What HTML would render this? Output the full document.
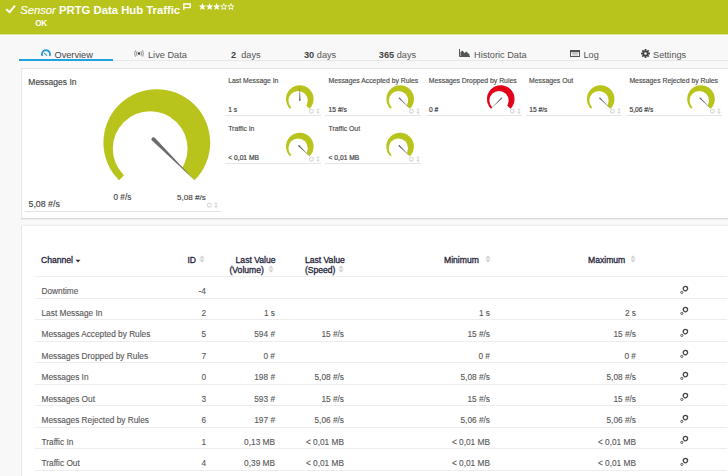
<!DOCTYPE html>
<html><head><meta charset="utf-8"><style>
*{margin:0;padding:0;box-sizing:border-box}
html,body{width:728px;height:476px;overflow:hidden}
body{background:#f8f8f8;font-family:"Liberation Sans",sans-serif;position:relative;color:#555}
.abs{position:absolute}
#hdr{position:absolute;left:0;top:0;width:728px;height:34px;background:#b8c41c}
#hdr .t{position:absolute;white-space:nowrap;color:#fff}
.tab{position:absolute;top:50px;font-size:9.2px;color:#555;white-space:nowrap;line-height:11px}
.tab b{color:#444}
#tabline{position:absolute;left:19px;top:60px;width:709px;height:1px;background:#e8e8e8}
#tabblue{position:absolute;left:19px;top:59px;width:94px;height:2px;background:#1fa3dc}
.panel{position:absolute;background:#fff;border:1px solid #e6e6e6;border-bottom-color:#dadada}
.sub{position:absolute;width:100px;height:48px}
.sub .st{position:absolute;left:3.2px;top:8px;font-size:6.85px;color:#4a4a4a;-webkit-text-stroke:0.15px #4a4a4a;white-space:nowrap;line-height:9px}
.sub .sv{position:absolute;left:3.3px;top:36.6px;font-size:6.7px;color:#444;-webkit-text-stroke:0.2px #444;white-space:nowrap;line-height:9px}
.sub .ul{position:absolute;left:0;top:47px;width:96px;height:1px;background:#e6e6e6}
.row{position:absolute;left:35px;width:692px;height:21.6px;border-top:1px solid #ededed}
.row span{position:absolute;top:9.2px;font-size:8.3px;line-height:10px;color:#585858;-webkit-text-stroke:0.12px #585858;white-space:nowrap}
.c0{left:6.5px}
.c1{right:calc(692px - 171px)}
.c2{right:calc(692px - 240px)}
.c3{right:calc(692px - 309px)}
.c4{right:calc(692px - 455px)}
.c5{right:calc(692px - 601px)}
.gear{left:645px;top:7.5px!important}
.hd{position:absolute;font-size:8.6px;color:#24243a;white-space:nowrap;line-height:9.5px;-webkit-text-stroke:0.3px #24243a}
.sic{position:absolute}
</style></head><body>
<div id="hdr">
  <svg class="abs" style="left:5px;top:4px" width="11" height="10" viewBox="0 0 11 10"><path d="M1.2,5.2 L4.6,8.2 L10,1.6" fill="none" stroke="#fff" stroke-width="1.9"/></svg>
  <div class="t" style="left:20.3px;top:3.6px;font-size:11.2px;font-style:italic;line-height:12px;-webkit-text-stroke:0.15px #fff">Sensor</div>
  <div class="t" style="left:59px;top:4px;font-size:11.3px;font-weight:bold;line-height:12px">PRTG Data Hub Traffic</div>
  <svg class="abs" style="left:183px;top:3px" width="8" height="7" viewBox="0 0 8 7"><path d="M0.8,0.3 V7 M0.8,1 H7.2 V4.6 H0.8" fill="none" stroke="#fff" stroke-width="1.4"/></svg>
  <svg class="abs" style="left:199.3px;top:3px" width="37" height="8" viewBox="0 0 37 8"><g transform="translate(0.0,0)"><path d="M3.5,0 L4.5,2.4 L7,2.5 L5.1,4.2 L5.8,6.9 L3.5,5.4 L1.2,6.9 L1.9,4.2 L0,2.5 L2.5,2.4Z" fill="#fff"/></g><g transform="translate(7.1,0)"><path d="M3.5,0 L4.5,2.4 L7,2.5 L5.1,4.2 L5.8,6.9 L3.5,5.4 L1.2,6.9 L1.9,4.2 L0,2.5 L2.5,2.4Z" fill="#fff"/></g><g transform="translate(14.2,0)"><path d="M3.5,0 L4.5,2.4 L7,2.5 L5.1,4.2 L5.8,6.9 L3.5,5.4 L1.2,6.9 L1.9,4.2 L0,2.5 L2.5,2.4Z" fill="#fff"/></g><g transform="translate(21.299999999999997,0)"><path d="M3.5,0.6 L4.3,2.8 L6.5,2.9 L4.8,4.3 L5.4,6.5 L3.5,5.2 L1.6,6.5 L2.2,4.3 L0.5,2.9 L2.7,2.8Z" fill="none" stroke="#fff" stroke-width="0.9"/></g><g transform="translate(28.4,0)"><path d="M3.5,0.6 L4.3,2.8 L6.5,2.9 L4.8,4.3 L5.4,6.5 L3.5,5.2 L1.6,6.5 L2.2,4.3 L0.5,2.9 L2.7,2.8Z" fill="none" stroke="#fff" stroke-width="0.9"/></g></svg>
  <div class="t" style="left:35.3px;top:18.9px;font-size:8.2px;font-weight:bold;line-height:9px;letter-spacing:-0.5px">OK</div>
</div>
<div class="abs" style="left:0;top:34px;width:728px;height:1px;background:#dce3a0"></div><div class="abs" style="left:0;top:35px;width:728px;height:1px;background:#fdfdfd"></div>

<svg class="abs" style="left:0;top:0" width="60" height="60"><path d="M42.3,56 A4.1,4.1 0 1 1 49.7,56" fill="none" stroke="#1e9ad8" stroke-width="1.7"/><path d="M44.5,53.4 L46.8,55.3" stroke="#3a8fd0" stroke-width="1.1" stroke-linecap="round"/></svg>
<div class="tab" style="left:54.5px;color:#444">Overview</div>
<svg class="abs" style="left:134.2px;top:49.8px" width="10" height="7" viewBox="0 0 10 7"><circle cx="5" cy="3.5" r="1.2" fill="#333"/><path d="M3,1.2 Q1.8,3.5 3,5.8 M7,1.2 Q8.2,3.5 7,5.8 M1.4,0.3 Q-0.2,3.5 1.4,6.7 M8.6,0.3 Q10.2,3.5 8.6,6.7" fill="none" stroke="#777" stroke-width="0.8"/></svg>
<div class="tab" style="left:148px">Live Data</div>
<div class="tab" style="left:231px"><b>2</b>&nbsp; days</div>
<div class="tab" style="left:304px"><b>30</b> days</div>
<div class="tab" style="left:378.8px"><b>365</b> days</div>
<svg class="abs" style="left:458.5px;top:49px" width="11" height="8" viewBox="0 0 11 8"><path d="M0.5,0 V7.5 H11" fill="none" stroke="#555" stroke-width="1"/><path d="M1.5,7 L1.5,3 L3.5,1.5 L5.5,4 L7.5,2.5 L10.5,5.5 L10.5,7Z" fill="#555"/></svg>
<div class="tab" style="left:474px">Historic Data</div>
<svg class="abs" style="left:570px;top:49.5px" width="10" height="7" viewBox="0 0 10 7"><rect x="0.5" y="0.5" width="9" height="6" fill="#fff" stroke="#555" stroke-width="1"/><rect x="0.5" y="0.5" width="9" height="1.8" fill="#555"/><path d="M2,3.6 H8 M2,5 H8" stroke="#999" stroke-width="0.7"/></svg>
<div class="tab" style="left:583.5px">Log</div>
<svg class="abs" style="left:640.5px;top:48.5px" width="9" height="9" viewBox="0 0 9 9"><g fill="#444"><circle cx="4.5" cy="4.5" r="3"/><rect x="3.6" y="0" width="1.8" height="9"/><rect x="0" y="3.6" width="9" height="1.8"/><rect x="3.6" y="0" width="1.8" height="9" transform="rotate(45 4.5 4.5)"/><rect x="0" y="3.6" width="9" height="1.8" transform="rotate(45 4.5 4.5)"/></g><circle cx="4.5" cy="4.5" r="1.3" fill="#f3f3f3"/></svg>
<div class="tab" style="left:653px">Settings</div>
<div id="tabline"></div>
<div id="tabblue"></div>

<div class="panel" style="left:21px;top:68px;width:720px;height:151px;box-shadow:0 1px 0 #ececec"></div>
<div class="abs" style="left:28.3px;top:76.5px;font-size:8.5px;color:#444;line-height:10px;white-space:nowrap;-webkit-text-stroke:0.15px #444">Messages In</div>
<div class="abs" style="left:28.5px;top:198.5px;font-size:8.8px;color:#444;line-height:10px;white-space:nowrap;-webkit-text-stroke:0.15px #444">5,08 #/s</div>
<div class="abs" style="left:113.5px;top:192.5px;font-size:8.2px;color:#444;line-height:9px;white-space:nowrap;-webkit-text-stroke:0.15px #444">0 #/s</div>
<div class="abs" style="left:177px;top:192.5px;font-size:8.1px;color:#444;line-height:9px;white-space:nowrap;-webkit-text-stroke:0.15px #444">5,08 #/s</div>
<svg class="abs" style="left:205.8px;top:202px" width="14" height="7" viewBox="0 0 14 7"><circle cx="3.4" cy="3.2" r="1.9" fill="none" stroke="#d6d6d6" stroke-width="1.1"/><path d="M8.6,1.2 H11.4 M10,1.3 V4.2 M8.6,4.3 H11.4 M10,4.3 V6.2" fill="none" stroke="#d6d6d6" stroke-width="1"/></svg>
<div class="abs" style="left:25px;top:210.5px;width:195.5px;height:1px;background:#e3e3e3"></div>
<div class="sub" style="left:225px;top:68px"><div class="st">Last Message In</div><div class="sv">1 s</div><div class="ul"></div><svg class="ic" style="position:absolute;left:83px;top:40px" width="14" height="7" viewBox="0 0 14 7"><circle cx="3.4" cy="3.2" r="1.9" fill="none" stroke="#d6d6d6" stroke-width="1.1"/><path d="M8.6,1.2 H11.4 M10,1.3 V4.2 M8.6,4.3 H11.4 M10,4.3 V6.2" fill="none" stroke="#d6d6d6" stroke-width="1"/></svg></div>
<div class="sub" style="left:325.3px;top:68px"><div class="st">Messages Accepted by Rules</div><div class="sv">15 #/s</div><div class="ul"></div><svg class="ic" style="position:absolute;left:83px;top:40px" width="14" height="7" viewBox="0 0 14 7"><circle cx="3.4" cy="3.2" r="1.9" fill="none" stroke="#d6d6d6" stroke-width="1.1"/><path d="M8.6,1.2 H11.4 M10,1.3 V4.2 M8.6,4.3 H11.4 M10,4.3 V6.2" fill="none" stroke="#d6d6d6" stroke-width="1"/></svg></div>
<div class="sub" style="left:425.6px;top:68px"><div class="st">Messages Dropped by Rules</div><div class="sv">0 #</div><div class="ul"></div><svg class="ic" style="position:absolute;left:83px;top:40px" width="14" height="7" viewBox="0 0 14 7"><circle cx="3.4" cy="3.2" r="1.9" fill="none" stroke="#d6d6d6" stroke-width="1.1"/><path d="M8.6,1.2 H11.4 M10,1.3 V4.2 M8.6,4.3 H11.4 M10,4.3 V6.2" fill="none" stroke="#d6d6d6" stroke-width="1"/></svg></div>
<div class="sub" style="left:525.9px;top:68px"><div class="st">Messages Out</div><div class="sv">15 #/s</div><div class="ul"></div><svg class="ic" style="position:absolute;left:83px;top:40px" width="14" height="7" viewBox="0 0 14 7"><circle cx="3.4" cy="3.2" r="1.9" fill="none" stroke="#d6d6d6" stroke-width="1.1"/><path d="M8.6,1.2 H11.4 M10,1.3 V4.2 M8.6,4.3 H11.4 M10,4.3 V6.2" fill="none" stroke="#d6d6d6" stroke-width="1"/></svg></div>
<div class="sub" style="left:626.2px;top:68px"><div class="st">Messages Rejected by Rules</div><div class="sv">5,06 #/s</div><div class="ul"></div><svg class="ic" style="position:absolute;left:83px;top:40px" width="14" height="7" viewBox="0 0 14 7"><circle cx="3.4" cy="3.2" r="1.9" fill="none" stroke="#d6d6d6" stroke-width="1.1"/><path d="M8.6,1.2 H11.4 M10,1.3 V4.2 M8.6,4.3 H11.4 M10,4.3 V6.2" fill="none" stroke="#d6d6d6" stroke-width="1"/></svg></div>
<div class="sub" style="left:225px;top:116px"><div class="st">Traffic In</div><div class="sv">&lt; 0,01 MB</div><div class="ul"></div><svg class="ic" style="position:absolute;left:83px;top:40px" width="14" height="7" viewBox="0 0 14 7"><circle cx="3.4" cy="3.2" r="1.9" fill="none" stroke="#d6d6d6" stroke-width="1.1"/><path d="M8.6,1.2 H11.4 M10,1.3 V4.2 M8.6,4.3 H11.4 M10,4.3 V6.2" fill="none" stroke="#d6d6d6" stroke-width="1"/></svg></div>
<div class="sub" style="left:325.3px;top:116px"><div class="st">Traffic Out</div><div class="sv">&lt; 0,01 MB</div><div class="ul"></div><svg class="ic" style="position:absolute;left:83px;top:40px" width="14" height="7" viewBox="0 0 14 7"><circle cx="3.4" cy="3.2" r="1.9" fill="none" stroke="#d6d6d6" stroke-width="1.1"/><path d="M8.6,1.2 H11.4 M10,1.3 V4.2 M8.6,4.3 H11.4 M10,4.3 V6.2" fill="none" stroke="#d6d6d6" stroke-width="1"/></svg></div>

<svg class="abs" style="left:0;top:0" width="728" height="476"><path d="M156.80,142.60 L119.04,180.36 A53.40,53.40 0 1 1 194.56,180.36 Z" fill="#b8c41c"/><circle cx="150.18" cy="148.58" r="37.38" fill="#fff"/><path d="M152.06,140.55 L193.80,179.60 L154.75,137.86 Z" fill="#6b6b6b"/><circle cx="153.40" cy="139.20" r="1.90" fill="#6b6b6b"/><path d="M299.80,99.00 L290.04,108.76 A13.80,13.80 0 1 1 309.56,108.76 Z" fill="#b8c41c"/><circle cx="298.09" cy="100.55" r="9.66" fill="#fff"/><path d="M300.50,100.24 L299.80,85.48 L299.10,100.24 Z" fill="#666"/><circle cx="299.80" cy="100.24" r="0.70" fill="#666"/><path d="M400.20,99.00 L390.44,108.76 A13.80,13.80 0 1 1 409.96,108.76 Z" fill="#b8c41c"/><circle cx="398.49" cy="100.55" r="9.66" fill="#fff"/><path d="M398.83,98.62 L409.76,108.56 L399.82,97.63 Z" fill="#666"/><circle cx="399.32" cy="98.12" r="0.70" fill="#666"/><path d="M500.75,99.00 L490.99,108.76 A13.80,13.80 0 1 1 510.51,108.76 Z" fill="#e3001b"/><circle cx="499.04" cy="100.55" r="9.66" fill="#fff"/><path d="M501.13,97.63 L491.19,108.56 L502.12,98.62 Z" fill="#666"/><circle cx="501.63" cy="98.12" r="0.70" fill="#666"/><path d="M600.70,99.00 L590.94,108.76 A13.80,13.80 0 1 1 610.46,108.76 Z" fill="#b8c41c"/><circle cx="598.99" cy="100.55" r="9.66" fill="#fff"/><path d="M599.33,98.62 L610.26,108.56 L600.32,97.63 Z" fill="#666"/><circle cx="599.82" cy="98.12" r="0.70" fill="#666"/><path d="M701.00,99.00 L691.24,108.76 A13.80,13.80 0 1 1 710.76,108.76 Z" fill="#b8c41c"/><circle cx="699.29" cy="100.55" r="9.66" fill="#fff"/><path d="M699.63,98.62 L710.56,108.56 L700.62,97.63 Z" fill="#666"/><circle cx="700.12" cy="98.12" r="0.70" fill="#666"/><path d="M299.80,146.60 L290.04,156.36 A13.80,13.80 0 1 1 309.56,156.36 Z" fill="#b8c41c"/><circle cx="298.09" cy="148.15" r="9.66" fill="#fff"/><path d="M298.43,146.22 L309.36,156.16 L299.42,145.23 Z" fill="#666"/><circle cx="298.92" cy="145.72" r="0.70" fill="#666"/><path d="M400.10,146.60 L390.34,156.36 A13.80,13.80 0 1 1 409.86,156.36 Z" fill="#b8c41c"/><circle cx="398.39" cy="148.15" r="9.66" fill="#fff"/><path d="M398.73,146.22 L409.66,156.16 L399.72,145.23 Z" fill="#666"/><circle cx="399.22" cy="145.72" r="0.70" fill="#666"/></svg>

<div class="panel" style="left:21px;top:225px;width:720px;height:260px;border-top-color:#efefef"></div>
<div class="hd" style="left:41px;top:255.8px">Channel <svg width="6" height="4" viewBox="0 0 6 4" style="vertical-align:middle"><path d="M0.5,0.8 L5.5,0.8 L3,3.5Z" fill="#333"/></svg></div>
<div class="hd" style="left:187.4px;top:255.8px">ID</div>
<div class="hd" style="left:235.6px;top:255.8px">Last Value</div>
<div class="hd" style="left:229.5px;top:266.2px">(Volume)</div>
<div class="hd" style="left:304.9px;top:255.8px">Last Value</div>
<div class="hd" style="left:304.9px;top:266.2px">(Speed)</div>
<div class="hd" style="left:444px;top:255.8px">Minimum</div>
<div class="hd" style="left:588px;top:255.8px">Maximum</div>
<div class="row" style="top:276.0px"><span class="c0">Downtime</span><span class="c1">-4</span><span class="c2"></span><span class="c3"></span><span class="c4"></span><span class="c5"></span><span class="gear"><svg width="10" height="10" viewBox="0 0 10 10"><circle cx="5.4" cy="3.6" r="2.2" fill="none" stroke="#444" stroke-width="1.3"/><circle cx="1.8" cy="7.4" r="1.1" fill="none" stroke="#555" stroke-width="1"/></svg></span></div>
<div class="row" style="top:297.5px"><span class="c0">Last Message In</span><span class="c1">2</span><span class="c2">1 s</span><span class="c3"></span><span class="c4">1 s</span><span class="c5">2 s</span><span class="gear"><svg width="10" height="10" viewBox="0 0 10 10"><circle cx="5.4" cy="3.6" r="2.2" fill="none" stroke="#444" stroke-width="1.3"/><circle cx="1.8" cy="7.4" r="1.1" fill="none" stroke="#555" stroke-width="1"/></svg></span></div>
<div class="row" style="top:319.0px"><span class="c0">Messages Accepted by Rules</span><span class="c1">5</span><span class="c2">594 #</span><span class="c3">15 #/s</span><span class="c4">15 #/s</span><span class="c5">15 #/s</span><span class="gear"><svg width="10" height="10" viewBox="0 0 10 10"><circle cx="5.4" cy="3.6" r="2.2" fill="none" stroke="#444" stroke-width="1.3"/><circle cx="1.8" cy="7.4" r="1.1" fill="none" stroke="#555" stroke-width="1"/></svg></span></div>
<div class="row" style="top:340.5px"><span class="c0">Messages Dropped by Rules</span><span class="c1">7</span><span class="c2">0 #</span><span class="c3"></span><span class="c4">0 #</span><span class="c5">0 #</span><span class="gear"><svg width="10" height="10" viewBox="0 0 10 10"><circle cx="5.4" cy="3.6" r="2.2" fill="none" stroke="#444" stroke-width="1.3"/><circle cx="1.8" cy="7.4" r="1.1" fill="none" stroke="#555" stroke-width="1"/></svg></span></div>
<div class="row" style="top:362.0px"><span class="c0">Messages In</span><span class="c1">0</span><span class="c2">198 #</span><span class="c3">5,08 #/s</span><span class="c4">5,08 #/s</span><span class="c5">5,08 #/s</span><span class="gear"><svg width="10" height="10" viewBox="0 0 10 10"><circle cx="5.4" cy="3.6" r="2.2" fill="none" stroke="#444" stroke-width="1.3"/><circle cx="1.8" cy="7.4" r="1.1" fill="none" stroke="#555" stroke-width="1"/></svg></span></div>
<div class="row" style="top:383.5px"><span class="c0">Messages Out</span><span class="c1">3</span><span class="c2">593 #</span><span class="c3">15 #/s</span><span class="c4">15 #/s</span><span class="c5">15 #/s</span><span class="gear"><svg width="10" height="10" viewBox="0 0 10 10"><circle cx="5.4" cy="3.6" r="2.2" fill="none" stroke="#444" stroke-width="1.3"/><circle cx="1.8" cy="7.4" r="1.1" fill="none" stroke="#555" stroke-width="1"/></svg></span></div>
<div class="row" style="top:405.0px"><span class="c0">Messages Rejected by Rules</span><span class="c1">6</span><span class="c2">197 #</span><span class="c3">5,06 #/s</span><span class="c4">5,06 #/s</span><span class="c5">5,06 #/s</span><span class="gear"><svg width="10" height="10" viewBox="0 0 10 10"><circle cx="5.4" cy="3.6" r="2.2" fill="none" stroke="#444" stroke-width="1.3"/><circle cx="1.8" cy="7.4" r="1.1" fill="none" stroke="#555" stroke-width="1"/></svg></span></div>
<div class="row" style="top:426.5px"><span class="c0">Traffic In</span><span class="c1">1</span><span class="c2">0,13 MB</span><span class="c3">&lt; 0,01 MB</span><span class="c4">&lt; 0,01 MB</span><span class="c5">&lt; 0,01 MB</span><span class="gear"><svg width="10" height="10" viewBox="0 0 10 10"><circle cx="5.4" cy="3.6" r="2.2" fill="none" stroke="#444" stroke-width="1.3"/><circle cx="1.8" cy="7.4" r="1.1" fill="none" stroke="#555" stroke-width="1"/></svg></span></div>
<div class="row" style="top:448.0px"><span class="c0">Traffic Out</span><span class="c1">4</span><span class="c2">0,39 MB</span><span class="c3">&lt; 0,01 MB</span><span class="c4">&lt; 0,01 MB</span><span class="c5">&lt; 0,01 MB</span><span class="gear"><svg width="10" height="10" viewBox="0 0 10 10"><circle cx="5.4" cy="3.6" r="2.2" fill="none" stroke="#444" stroke-width="1.3"/><circle cx="1.8" cy="7.4" r="1.1" fill="none" stroke="#555" stroke-width="1"/></svg></span></div>
<div class="abs" style="left:35px;top:470px;width:692px;height:1px;background:#ededed"></div>

<svg class="sic" style="left:198.8px;top:255px" width="6" height="8" viewBox="0 0 6 8"><path d="M0.3,3.4 L3,0.3 L5.7,3.4Z M0.3,4.6 L3,7.7 L5.7,4.6Z" fill="#d4d4d4"/></svg><svg class="sic" style="left:268.2px;top:264.5px" width="6" height="8" viewBox="0 0 6 8"><path d="M0.3,3.4 L3,0.3 L5.7,3.4Z M0.3,4.6 L3,7.7 L5.7,4.6Z" fill="#d4d4d4"/></svg><svg class="sic" style="left:338px;top:264.5px" width="6" height="8" viewBox="0 0 6 8"><path d="M0.3,3.4 L3,0.3 L5.7,3.4Z M0.3,4.6 L3,7.7 L5.7,4.6Z" fill="#d4d4d4"/></svg><svg class="sic" style="left:484.5px;top:255px" width="6" height="8" viewBox="0 0 6 8"><path d="M0.3,3.4 L3,0.3 L5.7,3.4Z M0.3,4.6 L3,7.7 L5.7,4.6Z" fill="#d4d4d4"/></svg><svg class="sic" style="left:629.5px;top:255px" width="6" height="8" viewBox="0 0 6 8"><path d="M0.3,3.4 L3,0.3 L5.7,3.4Z M0.3,4.6 L3,7.7 L5.7,4.6Z" fill="#d4d4d4"/></svg></body></html>
